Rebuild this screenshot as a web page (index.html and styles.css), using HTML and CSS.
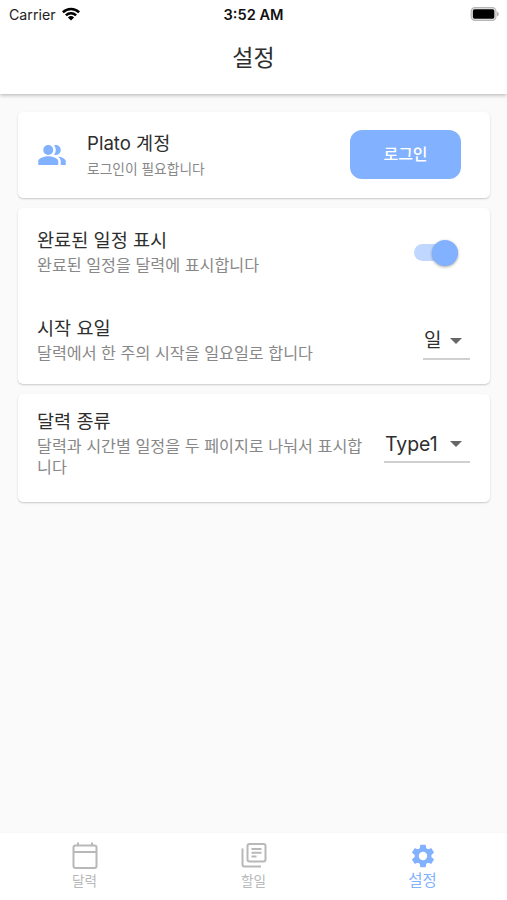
FILE: index.html
```
<!DOCTYPE html>
<html lang="ko">
<head>
<meta charset="utf-8">
<title>설정</title>
<link rel="stylesheet" href="styles.css">
</head>
<body>
<header class="header">
  <div class="status">
    <div class="carrier"><span>Carrier</span>
      <svg class="wifi" viewBox="0 0 18 14"><path d="M0 4.400a13 13 0 0 1 18 0L16.200 6.300a10.300 10.300 0 0 0-14.400 0zM3 7.500a8.700 8.700 0 0 1 12 0L13.200 9.300a6.100 6.100 0 0 0-8.400 0zM5.900 10.500a4.600 4.600 0 0 1 6.200 0L9 13.600z"/></svg>
    </div>
    <div class="time">3:52 AM</div>
    <svg class="battery" viewBox="0 0 31 15"><rect x=".7" y=".7" width="26.600" height="13.600" rx="4" fill="#e8e8e8" stroke="#b5b5b5" stroke-width="1.200"/><rect x="2.500" y="2.500" width="23" height="10" rx="1.800"/><path d="M28.500 5c2.300.6 2.300 4.400 0 5z" fill="#aaa"/></svg>
  </div>
  <h1>설정</h1>
</header>
<main class="content">
  <section class="card account">
    <svg class="people" viewBox="0 0 24 24"><path d="M16.670 13.130C18.040 14.060 19 15.320 19 17v3h4v-3c0-2.180-3.570-3.470-6.330-3.870zM15 12c2.210 0 4-1.790 4-4s-1.790-4-4-4c-.47 0-.91.1-1.330.24C14.500 5.270 15 6.580 15 8s-.5 2.730-1.330 3.760c.42.14.86.24 1.330.24z"/><circle cx="9" cy="8" r="4"/><path d="M9 13c-2.670 0-8 1.340-8 4v3h16v-3c0-2.660-5.330-4-8-4z"/></svg>
    <div class="copy">
      <h2>Plato 계정</h2>
      <p>로그인이 필요합니다</p>
    </div>
    <button class="login">로그인</button>
  </section>
  <section class="card options">
    <div class="row">
      <div class="copy">
        <h2>완료된 일정 표시</h2>
        <p>완료된 일정을 달력에 표시합니다</p>
      </div>
      <div class="switch"><span class="thumb"></span></div>
    </div>
    <div class="row">
      <div class="copy">
        <h2>시작 요일</h2>
        <p>달력에서 한 주의 시작을 일요일로 합니다</p>
      </div>
      <div class="select day"><span>일</span><i class="arrow"></i></div>
    </div>
  </section>
  <section class="card kind">
    <div class="row">
      <div class="copy">
        <h2>달력 종류</h2>
        <p>달력과 시간별 일정을 두 페이지로 나눠서 표시합니다</p>
      </div>
      <div class="select type"><span>Type1</span><i class="arrow"></i></div>
    </div>
  </section>
</main>
<nav class="tabs">
  <a class="tab">
    <svg viewBox="0 0 28 28" fill="none" stroke="currentColor" stroke-width="2"><rect x="2.500" y="3.500" width="23" height="22.500" rx="2"/><path d="M2.500 10h23M7 .5v3M21 .5v3"/></svg>
    <span>달력</span>
  </a>
  <a class="tab">
    <svg viewBox="0 0 28 28" fill="none" stroke="currentColor" stroke-width="2"><rect x="7.500" y="2" width="18" height="17.500" rx="2"/><path d="M2.500 6.500v16a2 2 0 0 0 2 2H21M11.500 7h10M11.500 10.800h10M11.500 14.500h5"/></svg>
    <span>할일</span>
  </a>
  <a class="tab active">
    <svg viewBox="0 0 24 24" fill="currentColor"><path d="M19.140 12.940c.04-.3.060-.61.060-.94 0-.32-.02-.64-.07-.94l2.030-1.580c.18-.14.23-.41.120-.61l-1.920-3.320c-.12-.22-.37-.29-.59-.22l-2.390.96c-.5-.38-1.030-.7-1.620-.94l-.36-2.540c-.04-.24-.24-.41-.48-.41h-3.840c-.24 0-.43.17-.47.41l-.36 2.540c-.59.24-1.130.57-1.620.94l-2.390-.96c-.22-.08-.47 0-.59.22L2.740 8.870c-.12.21-.08.47.12.61l2.030 1.580c-.05.3-.09.63-.09.94s.02.64.07.94l-2.030 1.580c-.18.14-.23.41-.12.61l1.920 3.320c.12.22.37.29.59.22l2.390-.96c.5.38 1.030.7 1.620.94l.36 2.540c.05.24.24.41.48.41h3.840c.24 0 .44-.17.47-.41l.36-2.540c.59-.24 1.130-.56 1.620-.94l2.390.96c.22.08.47 0 .59-.22l1.920-3.320c.12-.22.07-.47-.12-.61l-2.010-1.580zM12 15.600a3.600 3.600 0 1 1 0-7.200 3.600 3.600 0 0 1 0 7.200z"/></svg>
    <span>설정</span>
  </a>
</nav>
</body>
</html>
```

FILE: styles.css
```
* { box-sizing: border-box; }
body {
  margin: 0;
  height: 900px;
  display: flex;
  flex-direction: column;
  overflow: hidden;
  background: #fafafa;
  color: #2e2e2e;
  font-family: Inter, "Noto Sans CJK KR", sans-serif;
}
h1, h2, p { margin: 0; font-weight: 400; }
.header {
  height: 94px;
  flex: none;
  background: #fff;
  box-shadow: 0 1px 4px rgba(0, 0, 0, .3);
}
.status {
  height: 27px;
  padding: 0 7px 0 9px;
  display: grid;
  grid-template-columns: 1fr auto 1fr;
  align-items: center;
  font-size: 14.200px;
  line-height: 27px;
  color: #222;
}
.carrier { display: flex; align-items: center; gap: 6px; }
.wifi { width: 18px; height: 14px; margin-top: -2px; fill: #000; }
.time { margin: 2px 2px 0 0; font-size: 14.600px; font-weight: 600; color: #111; }
.battery { width: 30px; height: 14px; margin-top: -1px; justify-self: end; }
h1 {
  font-size: 23px;
  line-height: 62px;
  text-align: center;
}
.content {
  flex: 1;
  padding: 18px 17px 0 18px;
  display: flex;
  flex-direction: column;
  gap: 10px;
}
.card {
  background: #fff;
  border-radius: 5px;
  box-shadow: 0 1px 2px rgba(0, 0, 0, .2);
}
.account {
  height: 86px;
  padding: 0 29px 0 19px;
  display: flex;
  align-items: center;
}
.people { width: 30px; height: 30px; margin-top: -1px; fill: #82b1ff; }
.account .copy { margin-left: 20px; flex: 1; }
.account p { font-size: 13.750px; line-height: 22px; }
h2 { font-size: 18.600px; line-height: 25px; padding-bottom: 2px; }
p { font-size: 16.200px; line-height: 21px; color: #888; }
.login {
  width: 111px;
  height: 49px;
  margin-top: -1px;
  border: 0;
  border-radius: 12px;
  padding: 0 0 1px;
  background: #82b1ff;
  color: #fff;
  font: 500 16px/46px Inter, "Noto Sans CJK KR", sans-serif;
}
.options { height: 176px; }
.row {
  height: 88px;
  padding: 0 20px 0 19px;
  display: flex;
  align-items: center;
  justify-content: space-between;
}
.switch {
  width: 44px;
  height: 17px;
  margin: 1px 12px 0 0;
  border-radius: 9px;
  background: #c0d8ff;
  display: flex;
  align-items: center;
  justify-content: flex-end;
}
.thumb {
  width: 26px;
  height: 26px;
  border-radius: 50%;
  background: #82b1ff;
  box-shadow: 0 1px 3px rgba(0, 0, 0, .35);
}
.select {
  height: 40px;
  border-bottom: 2px solid #d0d0d0;
  display: flex;
  align-items: center;
  justify-content: space-between;
  padding: 0 8px 0 1px;
  font-size: 19px;
}
.day { width: 47px; }
.day span { margin-top: -2px; }
.type { width: 86px; flex: none; font-size: 19.400px; }
.type span { margin-top: 3px; }
.arrow {
  margin-top: 3px;
  border: 6px solid transparent;
  border-top-color: #666;
  border-bottom: 0;
}
.kind { height: 108px; }
.kind .row { height: 98px; }
.kind .copy { width: 330px; word-break: break-all; }
.tabs {
  height: 67px;
  flex: none;
  background: #fff;
  display: grid;
  grid-template-columns: repeat(3, 1fr);
  box-shadow: 0 -1px 3px rgba(0, 0, 0, .02);
}
.tab {
  display: flex;
  flex-direction: column;
  align-items: center;
  padding-top: 9px;
  color: #b8b8b8;
}
.tab svg { width: 28px; height: 28px; }
.tab span { font-size: 13.600px; line-height: 22px; }
.active { color: #82b1ff; }
.active span { font-size: 15.500px; }
```
